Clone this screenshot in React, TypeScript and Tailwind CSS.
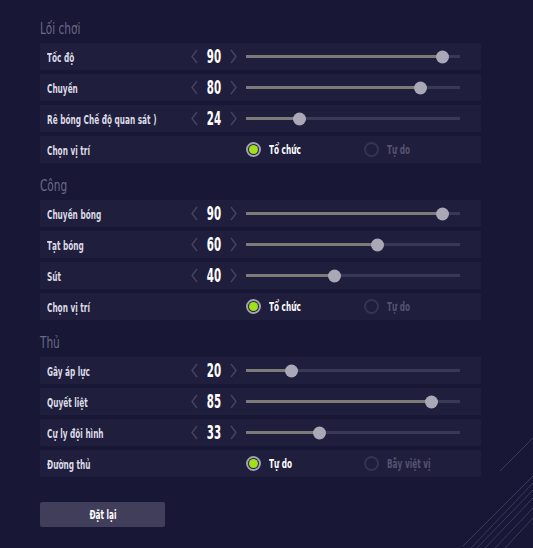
import type { ReactNode } from 'react'

type SliderRow = { kind: 'slider'; label: string; value: number }
type RadioRow = { kind: 'radio'; label: string; options: [string, string]; selected: 0 | 1 }
type Row = SliderRow | RadioRow

const sections: { title: string; rows: Row[] }[] = [
  {
    title: 'Lối chơi',
    rows: [
      { kind: 'slider', label: 'Tốc độ', value: 90 },
      { kind: 'slider', label: 'Chuyền', value: 80 },
      { kind: 'slider', label: 'Rê bóng Chế độ quan sát )', value: 24 },
      { kind: 'radio', label: 'Chọn vị trí', options: ['Tổ chức', 'Tự do'], selected: 0 },
    ],
  },
  {
    title: 'Công',
    rows: [
      { kind: 'slider', label: 'Chuyền bóng', value: 90 },
      { kind: 'slider', label: 'Tạt bóng', value: 60 },
      { kind: 'slider', label: 'Sút', value: 40 },
      { kind: 'radio', label: 'Chọn vị trí', options: ['Tổ chức', 'Tự do'], selected: 0 },
    ],
  },
  {
    title: 'Thủ',
    rows: [
      { kind: 'slider', label: 'Gây áp lực', value: 20 },
      { kind: 'slider', label: 'Quyết liệt', value: 85 },
      { kind: 'slider', label: 'Cự ly đội hình', value: 33 },
      { kind: 'radio', label: 'Đường thủ', options: ['Tự do', 'Bẫy việt vị'], selected: 0 },
    ],
  },
]

// the game font is far narrower than anything installed, so squeeze the condensed face
function Narrow({ children, className = '' }: { children: ReactNode; className?: string }) {
  return <span className={`inline-block origin-left scale-x-[0.68] whitespace-nowrap ${className}`}>{children}</span>
}

function Chevron({ dir }: { dir: 'left' | 'right' }) {
  return (
    <svg width="7" height="15" viewBox="0 0 7 15" className="shrink-0">
      <path
        d={dir === 'left' ? 'M6 1 L1 7.5 L6 14' : 'M1 1 L6 7.5 L1 14'}
        fill="none"
        stroke="#46445f"
        strokeWidth="1.4"
      />
    </svg>
  )
}

function Slider({ value }: { value: number }) {
  // thumb centre measured against the track start
  const centre = 2 + value * 2.156
  return (
    <div className="relative h-[3px] w-[214px] bg-[#3a3857]">
      <div className="h-full bg-[#7c7b78]" style={{ width: centre }} />
      <div
        className="absolute top-1/2 h-[13px] w-[13px] -translate-y-1/2 rounded-full bg-[#aaa8b6]"
        style={{ left: centre - 6.5 }}
      />
    </div>
  )
}

function Radio({ label, on }: { label: string; on: boolean }) {
  return (
    <div className="flex items-center gap-[8px]">
      {on ? (
        <span className="flex h-[15px] w-[15px] items-center justify-center rounded-full border-2 border-[#a3a1b1] bg-[#25243f]">
          <span className="h-[9px] w-[9px] rounded-full bg-[#9fe11a]" />
        </span>
      ) : (
        <span className="h-[15px] w-[15px] rounded-full border-2 border-[#363550]" />
      )}
      <Narrow className={on ? 'text-[12px] font-bold text-white' : 'text-[12px] font-bold text-[#55536f]'}>
        {label}
      </Narrow>
    </div>
  )
}

function RowShell({ label, children }: { label: string; children: ReactNode }) {
  return (
    <div className="flex h-[27px] items-center bg-[#1f1e3d] pl-[7px]">
      <div className="w-[144px] shrink-0">
        <Narrow className="text-[12px] font-bold text-[#dcdbe6]">{label}</Narrow>
      </div>
      {children}
    </div>
  )
}

function SettingRow({ row }: { row: Row }) {
  if (row.kind === 'slider') {
    return (
      <RowShell label={row.label}>
        <Chevron dir="left" />
        <span className="flex w-[32px] shrink-0 justify-center">
          <span className="inline-block scale-x-[0.6] text-[19px] leading-none font-bold text-white">{row.value}</span>
        </span>
        <Chevron dir="right" />
        <div className="ml-[9px]">
          <Slider value={row.value} />
        </div>
      </RowShell>
    )
  }
  return (
    <RowShell label={row.label}>
      <div className="ml-[55px] w-[118px]">
        <Radio label={row.options[0]} on={row.selected === 0} />
      </div>
      <Radio label={row.options[1]} on={row.selected === 1} />
    </RowShell>
  )
}

export default function App() {
  return (
    <div
      className="relative h-[548px] w-[533px] overflow-hidden bg-[#181736] px-[40px] pt-[20px]"
      style={{ fontFamily: '"DejaVu Sans Condensed", "Liberation Sans Narrow", "Roboto", sans-serif', fontStretch: 'condensed' }}
    >
      <div className="w-[441px]">
        {sections.map((s, i) => (
          <section key={s.title} className={i > 0 ? 'mt-[14px]' : ''}>
            <h2 className="mb-[5px] h-[18px] text-[15px] leading-[18px] text-[#6c6a86]">
              <span className="inline-block origin-left scale-x-[0.78] whitespace-nowrap">{s.title}</span>
            </h2>
            <div className="flex flex-col gap-[4px]">
              {s.rows.map((r, j) => (
                <SettingRow key={j} row={r} />
              ))}
            </div>
          </section>
        ))}
      </div>

      <button
        type="button"
        className="mt-[25px] flex h-[25px] w-[125px] items-center justify-center rounded-[2px] bg-[#403e5a] text-[12px] font-bold text-white"
      >
        <span className="inline-block scale-x-[0.68] whitespace-nowrap">Đặt lại</span>
      </button>

      <svg className="pointer-events-none absolute right-0 bottom-0" width="70" height="110" viewBox="0 0 70 110">
        <g stroke="#3a3960" strokeWidth="1">
          <line x1="70" y1="0" x2="37" y2="33" />
          <line x1="70" y1="38" x2="0" y2="108" />
          <line x1="70" y1="45" x2="8" y2="110" />
          <line x1="70" y1="52" x2="14" y2="110" />
          <line x1="70" y1="60" x2="22" y2="110" />
          <line x1="70" y1="70" x2="32" y2="110" />
          <line x1="70" y1="80" x2="42" y2="110" />
        </g>
      </svg>
    </div>
  )
}
